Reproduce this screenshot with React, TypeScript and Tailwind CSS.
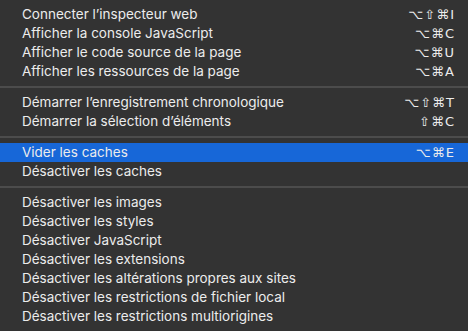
import React from "react";

type Item = { label: string; keys?: string; active?: boolean };

const GROUPS: Item[][] = [
  [
    { label: "Connecter l’inspecteur web", keys: "⌥⇧⌘I" },
    { label: "Afficher la console JavaScript", keys: "⌥⌘C" },
    { label: "Afficher le code source de la page", keys: "⌥⌘U" },
    { label: "Afficher les ressources de la page", keys: "⌥⌘A" },
  ],
  [
    { label: "Démarrer l’enregistrement chronologique", keys: "⌥⇧⌘T" },
    { label: "Démarrer la sélection d’éléments", keys: "⇧⌘C" },
  ],
  [
    { label: "Vider les caches", keys: "⌥⌘E", active: true },
    { label: "Désactiver les caches" },
  ],
  [
    { label: "Désactiver les images" },
    { label: "Désactiver les styles" },
    { label: "Désactiver JavaScript" },
    { label: "Désactiver les extensions" },
    { label: "Désactiver les altérations propres aux sites" },
    { label: "Désactiver les restrictions de fichier local" },
    { label: "Désactiver les restrictions multiorigines" },
  ],
];

function Row({ item }: { item: Item }) {
  return (
    <div
      className={`h-[19px] flex items-center pl-[22px] pr-[13px] ${
        item.active ? "bg-[#1767d8]" : ""
      }`}
    >
      <span className="flex-1 text-[13.5px] leading-none text-[#ececec] font-['Inter','Liberation_Sans',sans-serif]">
        {item.label}
      </span>
      {item.keys && (
        <span className="text-[13px] leading-none text-[#ececec] tracking-[1px] font-['DejaVu_Sans',sans-serif]">
          {item.keys}
        </span>
      )}
    </div>
  );
}

export default function App() {
  return (
    <div className="w-[468px] h-[331px] bg-[#333333] pt-[5px] overflow-hidden">
      {GROUPS.map((group, gi) => (
        <div key={gi}>
          {gi > 0 && (
            <div className="h-[12px] flex items-center">
              <div className="w-full h-[2px] bg-[#4c4c4c]" />
            </div>
          )}
          {group.map((item) => (
            <Row key={item.label} item={item} />
          ))}
        </div>
      ))}
    </div>
  );
}
